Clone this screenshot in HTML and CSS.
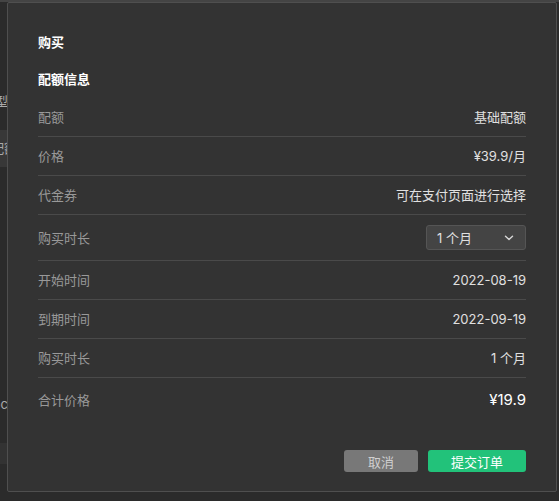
FILE: index.html
```html
<!DOCTYPE html>
<html lang="zh-CN">
<head>
    <meta charset="UTF-8">
    <meta name="viewport" content="width=device-width, initial-scale=1.0">
    <title>购买</title>
    <link rel="stylesheet" href="styles.css">
</head>
<body>
    <div class="page">
        <div class="topbar"></div>
        <div class="side">
            <div class="side-item item-type"><span>套餐类型</span></div>
            <div class="side-item item-base"><span>基础配额</span></div>
            <div class="side-item item-c"><span>abc</span></div>
            <div class="side-band"></div>
        </div>
    </div>

    <div class="dialog">
        <h1 class="dialog-title">购买</h1>
        <h2 class="section-title">配额信息</h2>

        <div class="rows">
            <div class="row">
                <span class="label">配额</span>
                <span class="value">基础配额</span>
            </div>
            <div class="row">
                <span class="label">价格</span>
                <span class="value">¥39.9/月</span>
            </div>
            <div class="row">
                <span class="label">代金券</span>
                <span class="value">可在支付页面进行选择</span>
            </div>
            <div class="row row-select">
                <span class="label">购买时长</span>
                <div class="select">
                    <span>1 个月</span>
                    <svg class="chevron" width="10" height="6" viewBox="0 0 10 6">
                        <path d="M1.5 1.2 L5 4.5 L8.5 1.2" fill="none" stroke="#d8d8d8" stroke-width="1.4" stroke-linecap="round" stroke-linejoin="round"/>
                    </svg>
                </div>
            </div>
            <div class="row">
                <span class="label">开始时间</span>
                <span class="value">2022-08-19</span>
            </div>
            <div class="row">
                <span class="label">到期时间</span>
                <span class="value">2022-09-19</span>
            </div>
            <div class="row">
                <span class="label">购买时长</span>
                <span class="value">1 个月</span>
            </div>
            <div class="row row-total">
                <span class="label">合计价格</span>
                <span class="value total">¥19.9</span>
            </div>
        </div>

        <div class="footer">
            <button class="btn btn-cancel">取消</button>
            <button class="btn btn-submit">提交订单</button>
        </div>
    </div>
</body>
</html>
```

FILE: styles.css
```css
body {
    margin: 0;
    background-color: #2b2b2b;
    font-family: Inter, "Noto Sans CJK SC", sans-serif;
    font-size: 13px;
    color: #ddd;
    overflow: hidden;
}
.page {
    height: 501px;
    position: relative;
}
.topbar {
    height: 2px;
    background-color: #444;
}
.side {
    width: 7px;
    display: flex;
    flex-direction: column;
}
.side-item {
    display: flex;
    justify-content: flex-end;
    overflow: hidden;
    white-space: nowrap;
    color: #aaa;
    line-height: 18px;
}
.item-type {
    margin-top: 90px;
    margin-right: -1px;
}
.item-base {
    margin-top: 20px;
    padding: 9px 0 10px;
    background-color: #383838;
    margin-right: -10px;
}
.item-c {
    margin-top: 228px;
    margin-right: -1px;
}
.side-band {
    margin-top: 30px;
    height: 21px;
    background-color: #333;
}

/* modal over the page */
.dialog {
    position: absolute;
    left: 7px;
    top: 2px;
    width: 488px;
    height: 488px;
    background-color: #333;
    border: 1px solid #4f4f4f;
    border-radius: 2px;
    padding: 0 30px;
    display: flex;
    flex-direction: column;
}
.dialog-title {
    margin: 30px 0 0;
    font-size: 13px;
    line-height: 18px;
    font-weight: bold;
    color: #fff;
}
.section-title {
    margin: 19px 0 10px;
    font-size: 13px;
    line-height: 18px;
    font-weight: bold;
    color: #fff;
}
.row {
    display: flex;
    justify-content: space-between;
    align-items: center;
    padding: 10px 0;
    line-height: 18px;
    border-bottom: 1px solid #4a4a4a;
}
.row-total {
    border-bottom: none;
    line-height: 24px;
}
.label {
    color: #999;
}
.value {
    color: #e0e0e0;
}
.total {
    font-size: 15px;
    color: #fff;
}
.select {
    width: 100px;
    height: 25px;
    box-sizing: border-box;
    background-color: #444;
    border: 1px solid #555;
    border-radius: 3px;
    display: flex;
    align-items: center;
    justify-content: space-between;
    padding: 0 11px 0 10px;
    color: #e0e0e0;
}
.footer {
    margin-top: 28px;
    display: flex;
    justify-content: flex-end;
    gap: 10px;
}
.btn {
    height: 22px;
    border: none;
    border-radius: 3px;
    font-family: inherit;
    font-size: 13px;
    padding: 0;
    cursor: pointer;
}
.btn-cancel {
    width: 74px;
    background-color: #787878;
    color: #cfcfcf;
}
.btn-submit {
    width: 98px;
    background-color: #22c27a;
    color: #fff;
}
```
